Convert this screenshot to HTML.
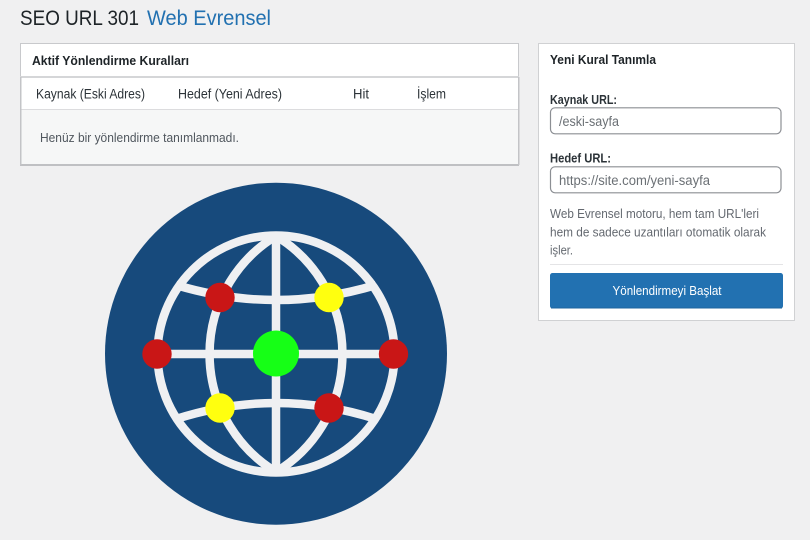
<!DOCTYPE html>
<html lang="tr">
<head>
<meta charset="utf-8">
<title>SEO URL 301 Web Evrensel</title>
<style>
html,body{margin:0;padding:0;width:810px;height:540px;overflow:hidden;background:#f0f0f1}
svg{display:block;position:absolute;left:0;top:0}
text{font-family:"Liberation Sans",sans-serif}
.t{filter:blur(.3px)}
</style>
</head>
<body>
<svg width="810" height="540" viewBox="0 0 810 540" xmlns="http://www.w3.org/2000/svg">
<rect width="810" height="540" fill="#f0f0f1"/>
<!-- Left card -->
<rect x="20.500" y="43.500" width="498" height="122" fill="#fff" stroke="#c8c9cc"/>
<rect x="21" y="110" width="497" height="55" fill="#f6f7f7"/>
<rect x="20" y="76" width="499" height="2" fill="#d5d6d8"/>
<rect x="21" y="109" width="497" height="1" fill="#dcdcde"/>
<rect x="20" y="164" width="499" height="2" fill="#bfc0c3"/>
<rect x="518" y="77" width="1.500" height="88" fill="#c3c4c7"/>
<rect x="20" y="77" width="1.500" height="88" fill="#c3c4c7"/>
<!-- Right card -->
<rect x="538.500" y="43.500" width="256" height="277" fill="#fff" stroke="#d0d1d3"/>
<!-- Inputs -->
<rect x="550.500" y="107.800" width="230.500" height="26" rx="4.500" fill="#fff" stroke="#8c8f94" stroke-width="1.200"/>
<rect x="550.500" y="166.800" width="230.500" height="26" rx="4.500" fill="#fff" stroke="#8c8f94" stroke-width="1.200"/>
<rect x="550" y="264" width="233" height="1" fill="#e4e4e6"/>
<rect x="550" y="273" width="233" height="35.500" rx="2.500" fill="#2271b1"/>
<rect x="551" y="307.500" width="231" height="1" fill="#1f659f"/>
<!-- Text -->
<g class="t">
<text x="20" y="25" font-size="21" fill="#1d2327" textLength="119" lengthAdjust="spacingAndGlyphs">SEO URL 301</text>
<text x="147" y="25" font-size="21" fill="#2271b1" textLength="124" lengthAdjust="spacingAndGlyphs">Web Evrensel</text>
<text x="32" y="65" font-size="12.500" font-weight="700" fill="#1d2327" textLength="157" lengthAdjust="spacingAndGlyphs">Aktif Yönlendirme Kuralları</text>
<text x="36" y="98.500" font-size="13.500" fill="#2c3338" textLength="109" lengthAdjust="spacingAndGlyphs">Kaynak (Eski Adres)</text>
<text x="178" y="98.500" font-size="13.500" fill="#2c3338" textLength="104" lengthAdjust="spacingAndGlyphs">Hedef (Yeni Adres)</text>
<text x="353" y="98.500" font-size="13.500" fill="#2c3338" textLength="16" lengthAdjust="spacingAndGlyphs">Hit</text>
<text x="417" y="98.500" font-size="13.500" fill="#2c3338" textLength="29" lengthAdjust="spacingAndGlyphs">İşlem</text>
<text x="40" y="142" font-size="12.500" fill="#50575e" textLength="199" lengthAdjust="spacingAndGlyphs">Henüz bir yönlendirme tanımlanmadı.</text>
<text x="550" y="64" font-size="12.500" font-weight="700" fill="#1d2327" textLength="106" lengthAdjust="spacingAndGlyphs">Yeni Kural Tanımla</text>
<text x="550" y="104" font-size="12.500" font-weight="700" fill="#2c3338" textLength="67" lengthAdjust="spacingAndGlyphs">Kaynak URL:</text>
<text x="550" y="162.500" font-size="12.500" font-weight="700" fill="#2c3338" textLength="61" lengthAdjust="spacingAndGlyphs">Hedef URL:</text>
<text x="559" y="126" font-size="13.500" fill="#6b7075" textLength="60" lengthAdjust="spacingAndGlyphs">/eski-sayfa</text>
<text x="559" y="185" font-size="13.500" fill="#6b7075" textLength="151" lengthAdjust="spacingAndGlyphs">https://site.com/yeni-sayfa</text>
<text x="550" y="218" font-size="12.500" fill="#646970" textLength="209" lengthAdjust="spacingAndGlyphs">Web Evrensel motoru, hem tam URL'leri</text>
<text x="550" y="236.500" font-size="12.500" fill="#646970" textLength="216" lengthAdjust="spacingAndGlyphs">hem de sadece uzantıları otomatik olarak</text>
<text x="550" y="254.500" font-size="12.500" fill="#646970" textLength="23" lengthAdjust="spacingAndGlyphs">işler.</text>
<text x="612.500" y="295" font-size="12.500" fill="#fff" textLength="109" lengthAdjust="spacingAndGlyphs">Yönlendirmeyi Başlat</text>
</g>
<!-- Globe -->
<circle cx="276" cy="353.700" r="171" fill="#174a7c"/>
<g fill="none" stroke="#eff0f2" stroke-width="8.500">
<path d="M176 285Q276 315 376 285"/>
<path d="M176 419Q276 387 376 419"/>
<path d="M276 236A138 138 0 0 0 276 472A138 138 0 0 0 276 236Z" stroke-linejoin="bevel"/>
<path d="M276 236V472"/>
<path d="M157 354H394"/>
<circle cx="276" cy="354" r="118.500"/>
</g>
<circle cx="220" cy="297.500" r="14.700" fill="#c91616"/>
<circle cx="329" cy="297.500" r="14.700" fill="#ffff0f"/>
<circle cx="157" cy="354" r="14.700" fill="#c91616"/>
<circle cx="393.500" cy="354" r="14.700" fill="#c91616"/>
<circle cx="276" cy="353.500" r="23" fill="#16ff16"/>
<circle cx="220" cy="408" r="14.700" fill="#ffff0f"/>
<circle cx="329" cy="408" r="14.700" fill="#c91616"/>
</svg>
</body>
</html>
